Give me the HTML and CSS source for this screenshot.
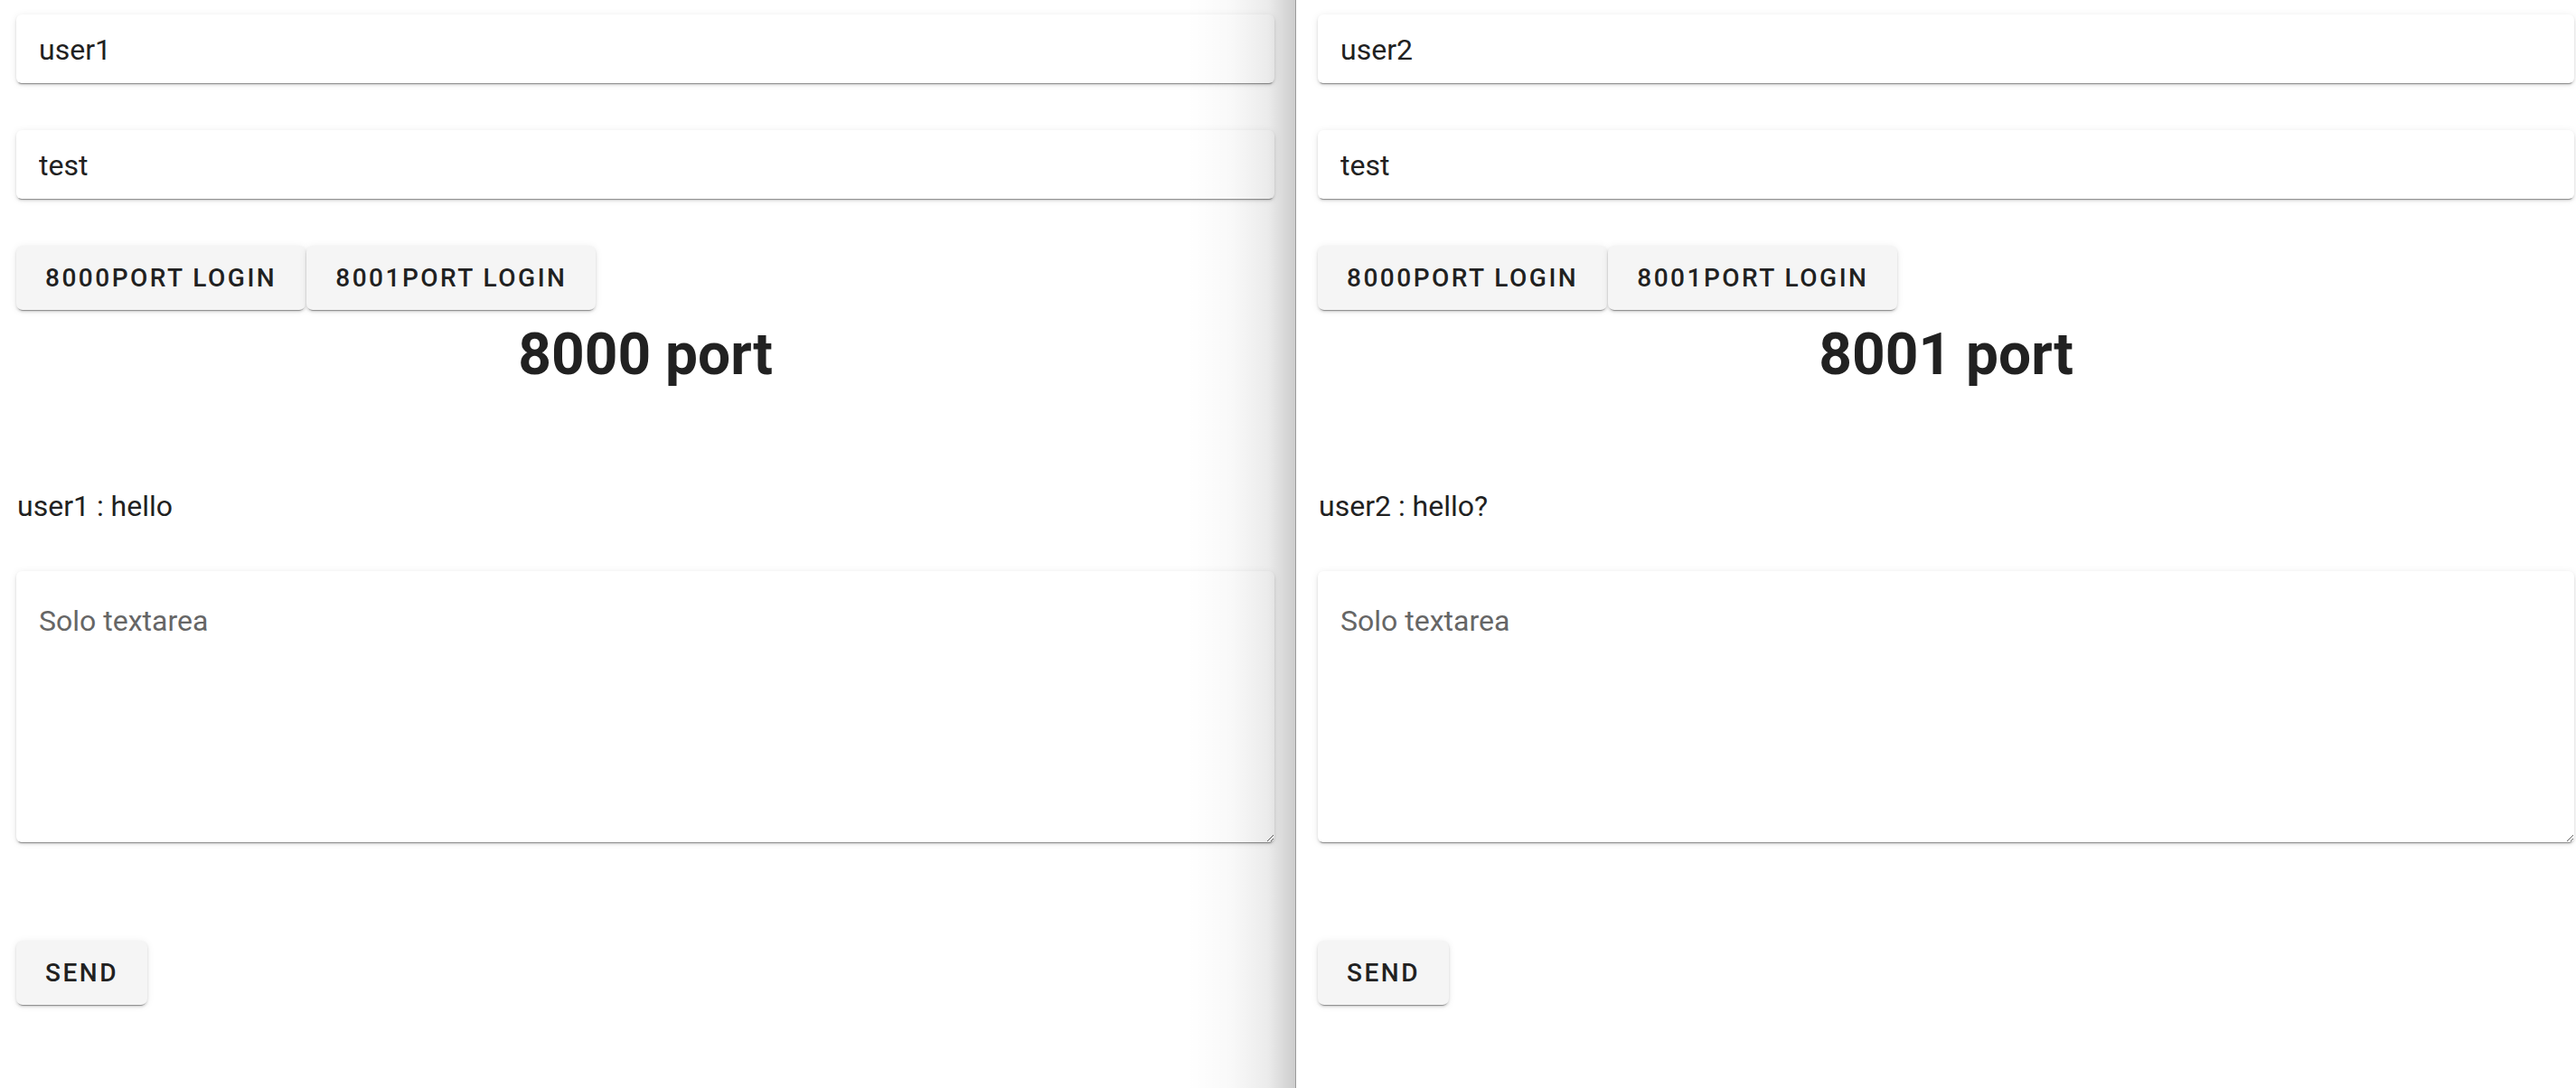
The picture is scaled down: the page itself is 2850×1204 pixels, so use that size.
FILE: index.html
```html
<!DOCTYPE html>
<html lang="en">
<head>
<meta charset="utf-8">
<title>Chat ports</title>
<link rel="stylesheet" href="styles.css">
</head>
<body>
<div class="screen">
  <section class="pane pane-left">
    <input class="solo-field first" type="text" value="user1">
    <input class="solo-field" type="text" value="test">
    <div class="btn-row">
      <button class="btn">8000PORT LOGIN</button>
      <button class="btn">8001PORT LOGIN</button>
    </div>
    <h1 class="port-title">8000 port</h1>
    <p class="message">user1 : hello</p>
    <textarea class="solo-area" placeholder="Solo textarea"></textarea>
    <div class="send-row"><button class="btn">SEND</button></div>
    <div class="window-shadow"></div>
  </section>
  <div class="divider"></div>
  <section class="pane pane-right">
    <input class="solo-field first" type="text" value="user2">
    <input class="solo-field" type="text" value="test">
    <div class="btn-row">
      <button class="btn">8000PORT LOGIN</button>
      <button class="btn">8001PORT LOGIN</button>
    </div>
    <h1 class="port-title">8001 port</h1>
    <p class="message">user2 : hello?</p>
    <textarea class="solo-area" placeholder="Solo textarea"></textarea>
    <div class="send-row"><button class="btn">SEND</button></div>
  </section>
</div>
</body>
</html>
```

FILE: styles.css
```css
html, body {
  margin: 0;
  padding: 0;
  background: #ffffff;
}

body {
  font-family: Roboto, "Noto Sans", "Liberation Sans", sans-serif;
  color: #212121;
  width: 2850px;
  height: 1204px;
  overflow: hidden;
}

.screen {
  display: flex;
  height: 1204px;
}

.pane {
  display: flex;
  flex-direction: column;
  box-sizing: border-box;
  height: 1204px;
  background: #ffffff;
}

.pane-left {
  position: relative;
  width: 1433px;
  flex: none;
  padding: 0 23px 0 18px;
}

.pane-right {
  flex: 1;
  padding: 0 2px 0 24px;
}

.divider {
  width: 1px;
  flex: none;
  background: #9a9a9a;
}

.window-shadow {
  position: absolute;
  top: 0;
  right: 0;
  bottom: 0;
  width: 120px;
  pointer-events: none;
  background: linear-gradient(to right,
    rgba(0, 0, 0, 0) 0%,
    rgba(0, 0, 0, 0.025) 40%,
    rgba(0, 0, 0, 0.08) 75%,
    rgba(0, 0, 0, 0.2) 100%);
}

.solo-field {
  display: block;
  box-sizing: border-box;
  width: 100%;
  height: 76px;
  margin: 52px 0 0 0;
  padding: 19px 25px 17px;
  border: none;
  border-radius: 6px;
  outline: none;
  background: #ffffff;
  font-family: inherit;
  font-size: 32px;
  line-height: 40px;
  color: #212121;
  box-shadow: 0 3px 1px -2px rgba(0, 0, 0, 0.35),
              0 2px 3px 0 rgba(0, 0, 0, 0.14),
              0 1px 8px 0 rgba(0, 0, 0, 0.08);
}

.solo-field.first {
  margin-top: 16px;
}

.btn-row {
  display: flex;
  gap: 1px;
  margin-top: 52px;
}

.btn {
  box-sizing: border-box;
  height: 71px;
  padding: 0 32px;
  border: none;
  border-radius: 7px;
  background: #f5f5f5;
  color: #212121;
  font-family: inherit;
  font-size: 28px;
  font-weight: 500;
  letter-spacing: 0.0892em;
  text-transform: uppercase;
  cursor: pointer;
  box-shadow: 0 3px 1px -2px rgba(0, 0, 0, 0.35),
              0 2px 3px 0 rgba(0, 0, 0, 0.14),
              0 1px 8px 0 rgba(0, 0, 0, 0.08);
}

.port-title {
  margin: 17px 0 0 0;
  font-size: 64px;
  line-height: 65px;
  font-weight: 700;
  text-align: center;
  color: #212121;
}

.message {
  margin: 115px 0 0 1px;
  font-size: 32px;
  line-height: 40px;
  color: #212121;
}

.solo-area {
  display: block;
  box-sizing: border-box;
  width: 100%;
  height: 300px;
  margin: 52px 0 0 0;
  padding: 35px 25px 16px;
  border: none;
  border-radius: 6px;
  outline: none;
  background: #ffffff;
  font-family: inherit;
  font-size: 32px;
  line-height: 40px;
  color: #212121;
  resize: both;
  box-shadow: 0 3px 1px -2px rgba(0, 0, 0, 0.35),
              0 2px 3px 0 rgba(0, 0, 0, 0.14),
              0 1px 8px 0 rgba(0, 0, 0, 0.08);
}

.solo-area::placeholder {
  color: #666666;
  opacity: 1;
}

.send-row {
  display: flex;
  margin-top: 109px;
}
```
